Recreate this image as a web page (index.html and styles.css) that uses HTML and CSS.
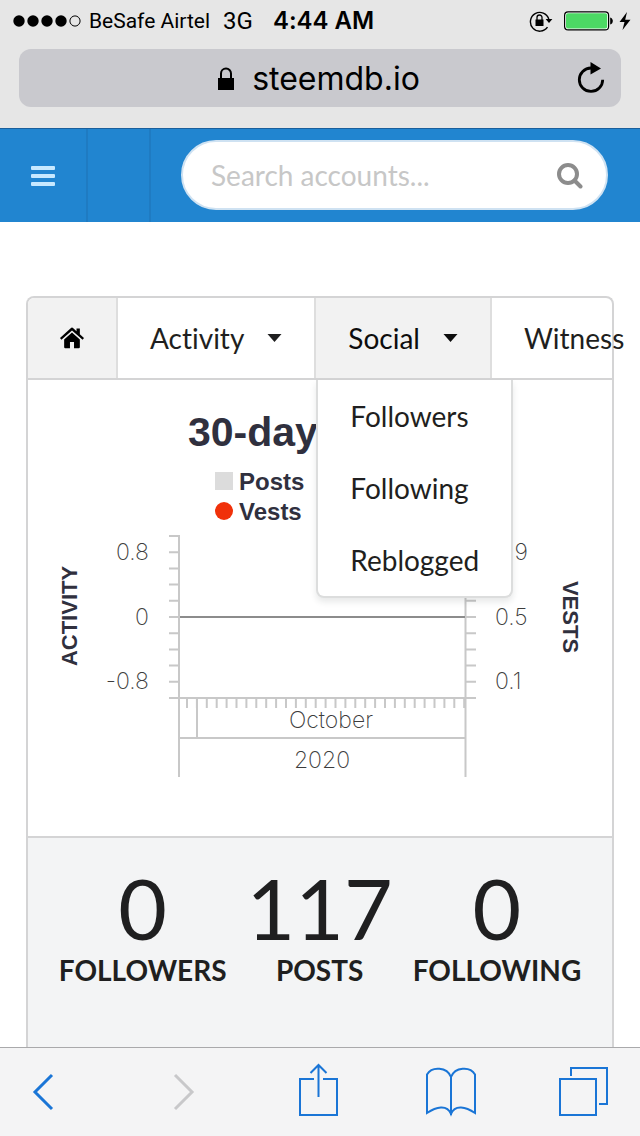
FILE: index.html
```html
<!DOCTYPE html>
<html lang="en">
<head>
<meta charset="UTF-8">
<meta name="viewport" content="width=device-width, initial-scale=1.0">
<title>steemdb.io</title>
<link rel="stylesheet" href="styles.css">
</head>
<body>

<header class="browser-top">
    <div class="status-bar">
        <svg class="signal" width="68" height="12" viewBox="0 0 68 12">
            <circle cx="6" cy="6" r="5.7"/>
            <circle cx="20" cy="6" r="5.7"/>
            <circle cx="34" cy="6" r="5.7"/>
            <circle cx="48" cy="6" r="5.7"/>
            <circle cx="62" cy="6" r="5.1" fill="none" stroke="#000"/>
        </svg>
        <span class="carrier">BeSafe Airtel</span>
        <span class="network">3G</span>
        <span class="time">4:44 AM</span>
        <div class="status-icons">
            <svg width="24" height="22" viewBox="0 0 24 22">
                <path d="M18.5 17.2A9.4 9.4 0 1 1 19.8 9" fill="none" stroke="#000" stroke-width="1.4"/>
                <path d="M16.6 9h6.8L20 13z"/>
                <rect x="6.5" y="9.5" width="8" height="6.5"/>
                <path d="M8 10V7.5a2.5 2.5 0 0 1 5 0V10" fill="none" stroke="#000" stroke-width="1.3"/>
            </svg>
            <svg width="50" height="20" viewBox="0 0 50 20">
                <rect x=".6" y=".9" width="44" height="18" rx="3.5" fill="#fff" stroke="#000" stroke-width="1.2"/>
                <rect x="2" y="2.3" width="41.2" height="15.2" rx="2" fill="#4cd964"/>
                <path d="M46.2 6.5c3.5 1 3.5 6 0 7z"/>
            </svg>
            <svg width="12" height="20" viewBox="0 0 12 20">
                <path d="M8 1L.5 11h5L3.5 19 11.5 8.700H6.200z"/>
            </svg>
        </div>
    </div>
    <button class="address" type="button">
        <span class="address-text">
            <svg width="16" height="23" viewBox="0 0 16 23">
                <rect x="0" y="11" width="16" height="12"/>
                <path d="M3 11V6.5a5 5 0 0 1 10 0V11" fill="none" stroke="#000" stroke-width="2"/>
            </svg>
            steemdb.io
        </span>
        <svg class="reload" width="28" height="32" viewBox="0 0 28 32">
            <path d="M14 6a11.700 11.700 0 1 0 11.700 11.700" fill="none" stroke="#000" stroke-width="2.800"/>
            <path d="M13.500 0L24 6.500l-10.500 6z"/>
        </svg>
    </button>
</header>

<div class="page">
    <nav class="navbar">
        <a class="nav-item nav-toggle" href="#" aria-label="Menu">
            <svg width="24" height="20" viewBox="0 0 24 20">
                <rect width="24" height="4" rx="1"/>
                <rect y="8" width="24" height="4" rx="1"/>
                <rect y="16" width="24" height="4" rx="1"/>
            </svg>
        </a>
        <a class="nav-item nav-blank" href="#" aria-label="Home"></a>
        <form class="search">
            <input type="text" placeholder="Search accounts..." aria-label="Search accounts">
            <svg width="28" height="28" viewBox="0 0 28 28">
                <circle cx="12" cy="13" r="9" fill="none" stroke="#8c8c8c" stroke-width="4"/>
                <path d="M18.500 19.500L24.500 25.500" stroke="#8c8c8c" stroke-width="4" stroke-linecap="round"/>
            </svg>
        </form>
    </nav>

    <main class="account">
        <div class="tabs">
            <a class="tab active" href="#" aria-label="Overview">
                <svg width="24" height="22" viewBox="0 0 26 22" preserveAspectRatio="none">
                    <path d="M13 5.500L4.500 12.600V20a1.200 1.200 0 0 0 1.200 1.200h5.100v-6.200h4.400v6.200h5.100a1.200 1.200 0 0 0 1.200-1.200v-7.400z"/>
                    <path d="M26 11L21.500 7.200V1.600h-3.600v2.600L14.400 1.200a2 2 0 0 0-2.800 0L0 11l1.500 1.700L13 3.500l11.500 9.200z"/>
                </svg>
            </a>
            <button class="tab" type="button">Activity
                <svg class="caret" width="15" height="8" viewBox="0 0 15 8"><path d="M.5 0h14l-7 8z"/></svg>
            </button>
            <div class="dropdown">
                <button class="tab active" type="button" aria-expanded="true">Social
                    <svg class="caret" width="15" height="8" viewBox="0 0 15 8"><path d="M.5 0h14l-7 8z"/></svg>
                </button>
                <div class="dropdown-menu">
                    <a href="#">Followers</a>
                    <a href="#">Following</a>
                    <a href="#">Reblogged</a>
                </div>
            </div>
            <a class="tab" href="#">Witness</a>
        </div>

        <div class="chart">
            <svg viewBox="0 0 584 456">
                <text class="chart-title" x="160" y="66">30-day</text>
                <rect x="187" y="92" width="18" height="18" fill="#dcdcdc"/>
                <text class="legend" x="211" y="110">Posts</text>
                <circle cx="196" cy="131" r="9" fill="#f0310a"/>
                <text class="legend" x="211" y="140">Vests</text>

                <text class="axis-title" text-anchor="middle" transform="translate(49 236) rotate(-90)">ACTIVITY</text>
                <text class="axis-title" text-anchor="middle" transform="translate(535 237) rotate(90)">VESTS</text>

                <!-- y axes -->
                <path class="axis" d="M151 155V397M437.500 155V397"/>
                <path class="axis" d="M141 156h10M141 172.200h10M141 188.400h10M141 204.600h10M141 220.800h10M141 237h10M141 253.200h10M141 269.400h10M141 285.600h10M141 301.800h10M141 318h10"/>
                <path class="axis" d="M438 156h10M438 172.200h10M438 188.400h10M438 204.600h10M438 220.800h10M438 237h10M438 253.200h10M438 269.400h10M438 285.600h10M438 301.800h10M438 318h10"/>
                <!-- x axis -->
                <path class="axis" d="M151 318H438M151 358H438M169 318V358"/>
                <path class="days" d="M158 323H438"/>
                <path class="zero" d="M152 237H437"/>

                <g class="value" text-anchor="end">
                    <text x="121" y="180">0.8</text>
                    <text x="121" y="245">0</text>
                    <text x="121" y="309">-0.8</text>
                </g>
                <g class="value">
                    <text x="467" y="180">0.9</text>
                    <text x="467" y="245">0.5</text>
                    <text x="467" y="309">0.1</text>
                </g>
                <g class="value" text-anchor="middle">
                    <text x="303" y="348">October</text>
                    <text x="294" y="388">2020</text>
                </g>
            </svg>
        </div>

        <div class="stats">
            <div class="stat">
                <div class="stat-value">0</div>
                <div class="stat-label">Followers</div>
            </div>
            <div class="stat">
                <div class="stat-value">117</div>
                <div class="stat-label">Posts</div>
            </div>
            <div class="stat">
                <div class="stat-value">0</div>
                <div class="stat-label">Following</div>
            </div>
        </div>
    </main>
</div>

<footer class="toolbar">
    <button type="button" aria-label="Back">
        <svg width="50" height="54" viewBox="0 0 50 54"><path d="M27 10L10 27l17 17"/></svg>
    </button>
    <button type="button" aria-label="Forward" disabled>
        <svg width="50" height="54" viewBox="0 0 50 54"><path d="M16 10l17 17-17 17"/></svg>
    </button>
    <button type="button" aria-label="Share">
        <svg width="50" height="54" viewBox="0 0 50 54"><path d="M22 14H8v36h37V14H31M26.500 32V0M18.500 8l8-8 8 8"/></svg>
    </button>
    <button type="button" aria-label="Bookmarks">
        <svg width="50" height="54" viewBox="0 0 50 54"><path d="M25 12C21 2 6 1 1 9.500V48c9-6 20-9 24 1 4-10 15-7 24-1V9.500C44 1 29 2 25 12zV50"/></svg>
    </button>
    <button type="button" aria-label="Tabs">
        <svg width="50" height="54" viewBox="0 0 50 54"><path d="M1 14h36v36H1zM12 11V3h36v36h-8"/></svg>
    </button>
</footer>

</body>
</html>
```
FILE: styles.css
```css
* {
    box-sizing: border-box;
}
body {
    margin: 0;
    height: 100vh;
    display: flex;
    flex-direction: column;
    font-family: Lato, sans-serif;
    font-size: 28px;
    font-variant-ligatures: none;
    color: #1f1f20;
    background-color: #fff;
}
button {
    font: inherit;
    font-variant-ligatures: none;
    color: inherit;
    background: none;
    border: none;
    padding: 0;
}
a {
    color: inherit;
    text-decoration: none;
}
svg {
    flex: none;
    display: block;
}

/* browser top bar */
.browser-top {
    flex: none;
    height: 128px;
    padding: 0 19px;
    background-color: #e6e6e6;
    color: #000;
}
.status-bar {
    display: flex;
    align-items: center;
    height: 41px;
    margin: 0 -10px 8px -6px;
    font-family: Roboto, sans-serif;
    font-size: 21px;
}
.carrier {
    margin-left: 8px;
}
.network {
    margin-left: 13px;
    font-size: 24px;
}
.time {
    margin-left: 20px;
    font-family: Inter, sans-serif;
    font-size: 24px;
    font-weight: 600;
}
.status-icons {
    display: flex;
    align-items: center;
    gap: 5px;
    margin-left: auto;
}
.status-icons svg:first-child {
    margin-right: 6px;
}
.address {
    display: flex;
    align-items: center;
    width: 100%;
    height: 58px;
    padding: 0 16px;
    border-radius: 12px;
    background-color: #c9c9ce;
    font-family: Inter, sans-serif;
    font-size: 32px;
}
.address-text {
    flex: 1;
    display: flex;
    align-items: center;
    justify-content: center;
    gap: 18px;
    padding-left: 26px;
}

/* site */
.page {
    flex: 1;
    min-height: 0;
    display: flex;
    flex-direction: column;
    overflow: hidden;
}
.navbar {
    flex: none;
    display: flex;
    height: 94px;
    background-color: #2185d0;
    border-top: 1px solid #1a5f9c;
}
.nav-item {
    flex: none;
    display: flex;
    align-items: center;
    justify-content: center;
    border-right: 2px solid #1f7bc2;
}
.nav-toggle {
    width: 88px;
}
.nav-toggle svg {
    fill: #c7e9ff;
}
.nav-blank {
    width: 63px;
}
.search {
    flex: 1;
    min-width: 0;
    display: flex;
    align-items: center;
    height: 70px;
    margin: 11px 32px 0 30px;
    padding: 0 22px 0 28px;
    border: 2px solid #cfe2f2;
    border-radius: 35px;
    background-color: #fff;
}
.search input {
    flex: 1;
    min-width: 0;
    padding: 0;
    border: none;
    outline: none;
    background: none;
    font: inherit;
}
.search input::placeholder {
    color: #c7c7c7;
}

.account {
    flex: 1 0 auto;
    display: flex;
    flex-direction: column;
    margin: 74px 26px 0;
    border: 2px solid #d4d4d5;
    border-bottom: none;
    border-radius: 8px 8px 0 0;
}
.tabs {
    flex: none;
    display: flex;
    height: 82px;
    border-bottom: 2px solid #d4d4d5;
}
.tab {
    flex: none;
    display: flex;
    align-items: center;
    gap: 23px;
    height: 80px;
    padding: 0 32px;
    border-right: 2px solid #dedede;
}
.tab:first-child {
    border-top-left-radius: 6px;
}
.tab:last-child {
    border-right: none;
}
.dropdown .tab {
    border-right: 2px solid #dedede;
    border-radius: 0;
}
.tab.active {
    background-color: #f2f2f2;
    color: #0d0d0d;
}
.caret {
    fill: currentColor;
}
.dropdown {
    flex: none;
    position: relative;
}
.dropdown-menu {
    position: absolute;
    top: 82px;
    left: 0;
    z-index: 1;
    border: 2px solid #dcdddd;
    border-top: none;
    border-radius: 0 0 8px 8px;
    background-color: #fff;
    box-shadow: 0 4px 6px rgba(34, 36, 38, 0.1);
}
.dropdown-menu a {
    display: flex;
    align-items: center;
    height: 72px;
    padding: 0 32px;
}

/* chart */
.chart {
    border-bottom: 2px solid #d4d4d5;
}
.chart svg {
    width: 100%;
}
.chart text {
    fill: #30303e;
    font-family: "Liberation Sans", Arial, sans-serif;
    font-weight: bold;
}
.chart .chart-title {
    font-size: 41px;
}
.chart .legend {
    font-size: 24px;
}
.chart .axis-title {
    font-size: 22px;
}
.chart .value text {
    fill: #3c3c3c;
    font-family: Inter, sans-serif;
    font-size: 23px;
    font-weight: 200;
}
.axis {
    fill: none;
    stroke: #c8c8c8;
    stroke-width: 2px;
}
.days {
    stroke: #c8c8c8;
    stroke-width: 10px;
    stroke-dasharray: 2 7.9;
}
.zero {
    stroke: #8c8c8c;
    stroke-width: 2px;
}

/* stats */
.stats {
    flex: 1;
    display: flex;
    justify-content: center;
    gap: 20px;
    padding-top: 22px;
    background-color: #f3f4f5;
    text-align: center;
}
.stat-value {
    font-size: 84px;
    line-height: 96px;
}
.stat-label {
    font-weight: bold;
    line-height: 28px;
    text-transform: uppercase;
}

/* browser bottom bar */
.toolbar {
    flex: none;
    display: flex;
    align-items: center;
    justify-content: space-between;
    height: 89px;
    padding: 0 31px 0 25px;
    border-top: 1px solid #a9a9ab;
    background-color: #f4f4f5;
}
.toolbar svg {
    fill: none;
    stroke: #1a75d6;
    stroke-width: 2px;
    overflow: visible;
}
.toolbar button:first-child svg,
.toolbar button:disabled svg {
    stroke-width: 3px;
}
.toolbar button:disabled svg {
    stroke: #c8c8ca;
}
```
